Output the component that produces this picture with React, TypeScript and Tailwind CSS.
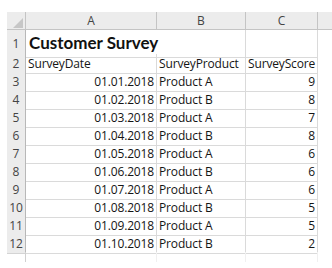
const rows: [string, string, number][] = [
  ['01.01.2018', 'Product A', 9],
  ['01.02.2018', 'Product B', 8],
  ['01.03.2018', 'Product A', 7],
  ['01.04.2018', 'Product B', 8],
  ['01.05.2018', 'Product A', 6],
  ['01.06.2018', 'Product B', 6],
  ['01.07.2018', 'Product A', 6],
  ['01.08.2018', 'Product B', 5],
  ['01.09.2018', 'Product A', 5],
  ['01.10.2018', 'Product B', 2],
]

const cols = 'grid grid-cols-[19px_131px_89px_72px_1fr]'
const rowHead = 'flex items-center justify-center bg-[#ececec] border-r border-b border-r-[#b8b8b8] border-b-[#d4d4d4] text-[#444] pt-[1px]'
const cell = 'flex items-center border-r border-b border-[#dadada] px-[2px] pt-[1px] whitespace-nowrap overflow-hidden tracking-[-0.15px]'

export default function App() {
  return (
    <div className="w-[332px] h-[268px] bg-white overflow-hidden pt-[12px] pl-[7px] text-[12px] text-[#151515]" style={{ fontFamily: '"Open Sans", sans-serif' }}>
      {/* column letters */}
      <div className={`${cols} h-[18px] bg-[#ececec] border-b border-[#c4c4c4] text-[#444]`}>
        <div className="relative border-r border-[#c4c4c4]">
          <svg className="absolute right-[2px] bottom-[2px]" width="10" height="10" viewBox="0 0 10 10">
            <polygon points="10,0 10,10 0,10" fill="#c6c6c6" />
          </svg>
        </div>
        <div className="flex items-center justify-center border-r border-[#c4c4c4]">A</div>
        <div className="flex items-center justify-center border-r border-[#c4c4c4]">B</div>
        <div className="flex items-center justify-center border-r border-[#c4c4c4]">C</div>
        <div />
      </div>

      {/* title row */}
      <div className={`${cols} h-[24px]`}>
        <div className={rowHead}>1</div>
        <div
          className="flex items-end pb-[1px] px-[3px] border-b border-[#dadada] whitespace-nowrap text-[17px] font-bold text-[#111] overflow-visible"
          style={{ fontFamily: 'Lato, sans-serif' }}
        >
          Customer Survey
        </div>
        <div className="border-r border-b border-[#dadada]" />
        <div className="border-r border-b border-[#dadada]" />
        <div />
      </div>

      {/* field names */}
      <div className={`${cols} h-[18px]`}>
        <div className={rowHead}>2</div>
        <div className={cell}>SurveyDate</div>
        <div className={cell}>SurveyProduct</div>
        <div className={cell}>SurveyScore</div>
        <div />
      </div>

      {rows.map(([date, product, score], i) => (
        <div key={i} className={`${cols} h-[18px]`}>
          <div className={rowHead}>{i + 3}</div>
          <div className={`${cell} justify-end`}>{date}</div>
          <div className={cell}>{product}</div>
          <div className={`${cell} justify-end`}>{score}</div>
          <div />
        </div>
      ))}

      <div className={`${cols} h-[10px]`}>
        <div className="border-r border-[#d0d0d0]" />
        <div className="border-r border-[#f0f0f0]" />
        <div className="border-r border-[#f0f0f0]" />
        <div className="border-r border-[#f0f0f0]" />
        <div />
      </div>
    </div>
  )
}
